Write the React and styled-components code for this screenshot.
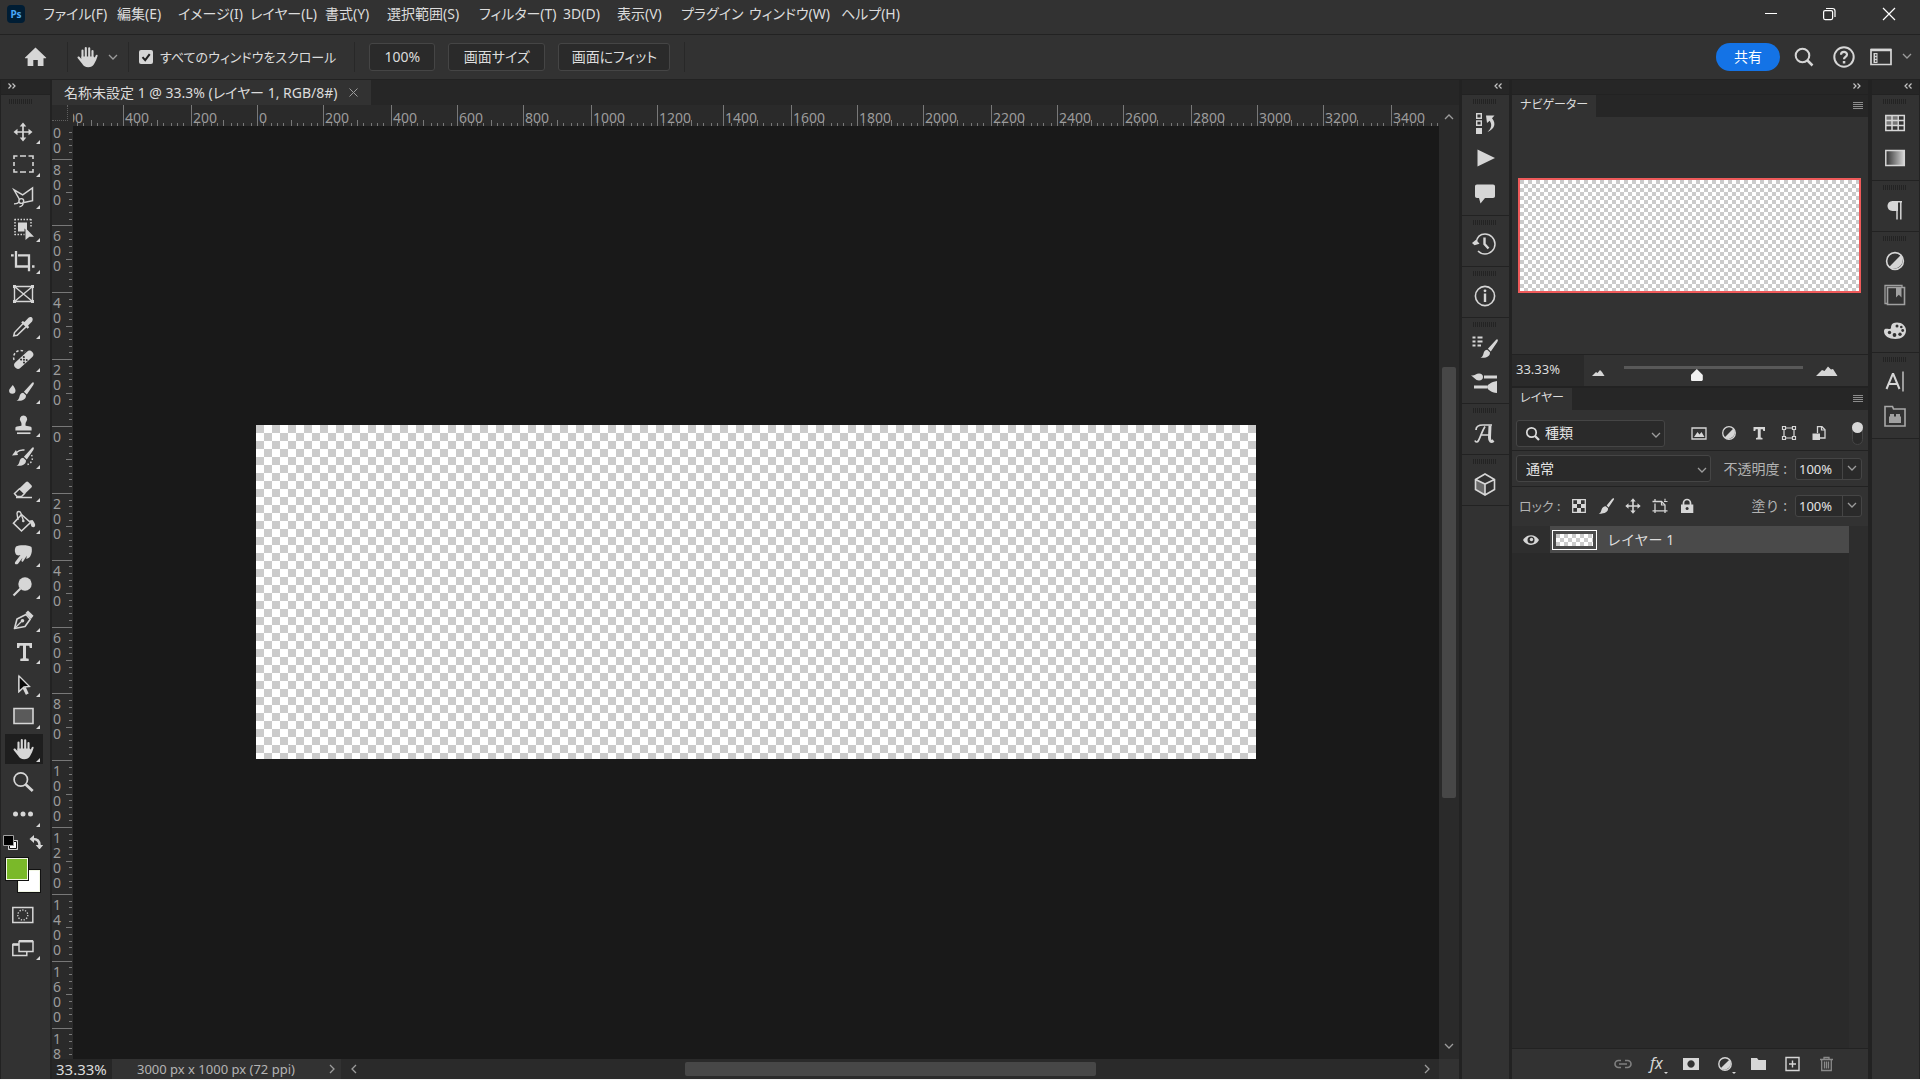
import React from "react";
import styled, { createGlobalStyle, css } from "styled-components";

const GlobalStyle = createGlobalStyle`
  * {
    box-sizing: border-box;
  }
  body {
    margin: 0;
    background: #262626;
    color: #dcdcdc;
    font-family: "Noto Sans", "Noto Sans CJK JP", sans-serif;
    font-size: 14px;
    line-height: 20px;
    overflow: hidden;
  }
  button, input, select {
    margin: 0;
    padding: 0;
    border: 0;
    background: none;
    color: inherit;
    font: inherit;
  }
  svg {
    display: block;
  }
`;

const c = {
  panel: "#323232",
  strip: "#262626",
  field: "#2a2a2a",
  line: "#222222",
  edge: "#454545",
  icon: "#d6d6d6",
  dim: "#9c9c9c",
};

const checker = (size) => css`
  background: repeating-conic-gradient(#ffffff 0 25%, #cbcbcb 0 50%) 0 0 /
    ${size * 2}px ${size * 2}px;
`;

/* ---------- window frame ---------- */

const Screen = styled.div`
  display: flex;
  flex-direction: column;
  height: 100vh;
  border-bottom: 1px solid #f4f4f4;
  background: ${c.line};
`;

const MenuBar = styled.header`
  display: flex;
  align-items: center;
  height: 35px;
  padding: 0 19px 6px 7px;
  background: ${c.panel};
  border-bottom: 1px solid ${c.line};
`;

const Logo = styled.span`
  display: grid;
  place-items: center;
  width: 18px;
  height: 18px;
  margin-right: 18px;
  border-radius: 4px;
  background: #001d34;
  color: #4aa8f8;
  font-size: 10px;
  font-weight: 700;
  line-height: 16px;
`;

const Menus = styled.nav`
  display: grid;
  grid-template-columns: 74px 61px 72px 75px 62px 92px 84px 54px 64px 68px 92px 70px;
  flex: 1;
  button {
    text-align: left;
    white-space: nowrap;
    font-feature-settings: "palt";
  }
`;

const WindowButtons = styled.div`
  display: flex;
  gap: 35px;
`;

const IconButton = styled.button`
  display: grid;
  place-items: center;
  color: ${(p) => p.$color || c.icon};
`;

const OptionsBar = styled.div`
  display: flex;
  align-items: center;
  height: 45px;
  padding: 0 8px 0 4px;
  background: ${c.panel};
  border-bottom: 1px solid ${c.line};
`;

const Divider = styled.span`
  width: 1px;
  height: 30px;
  margin: 0 ${(p) => p.$right || 14}px 0 ${(p) => p.$left || 14}px;
  background: #282828;
`;

const CheckLabel = styled.label`
  display: flex;
  align-items: center;
  gap: 7px;
  font-size: 13px;
  font-feature-settings: "palt";
`;

const CheckBox = styled.span`
  position: relative;
  input {
    appearance: none;
    display: block;
    width: 14px;
    height: 14px;
    border-radius: 2px;
    background: ${c.icon};
  }
  svg {
    position: absolute;
    inset: 0;
    pointer-events: none;
  }
`;

const OptionButton = styled.button`
  height: 28px;
  min-width: ${(p) => p.$width}px;
  margin-right: 13px;
  border: 1px solid ${c.edge};
  border-radius: 3px;
  background: ${c.field};
  font-feature-settings: "palt";
`;

const RightTools = styled.div`
  display: flex;
  align-items: center;
  margin-left: auto;
  gap: 10px;
`;

const ShareButton = styled.button`
  width: 64px;
  height: 28px;
  border-radius: 14px;
  background: #1473e6;
  color: #ffffff;
`;

const Main = styled.main`
  display: flex;
  flex: 1;
  min-height: 0;
`;

/* ---------- docks ---------- */

const Dock = styled.aside`
  display: flex;
  flex-direction: column;
  width: ${(p) => p.$width}px;
  padding: 0 ${(p) => p.$right || 0}px 0 1px;
  background: ${c.line};
`;

const DockHeader = styled.div`
  display: flex;
  align-items: center;
  justify-content: ${(p) => (p.$end ? "flex-end" : "flex-start")};
  height: 15px;
  padding: 0 7px 2px;
  background: ${c.strip};
  border-bottom: 1px solid ${c.line};
`;

const DockBody = styled.div`
  flex: 1;
  background: ${c.panel};
`;

const Grip = styled.div`
  width: 24px;
  height: 5px;
  background: repeating-linear-gradient(90deg, #232323 0 1px, transparent 1px 2px);
`;

const DockGroup = styled.div`
  display: flex;
  flex-direction: column;
  align-items: center;
  padding: 4px 1px 4px 0;
  border-bottom: 1px solid ${c.line};
  ${Grip} {
    margin-bottom: 2px;
  }
  button {
    width: 35px;
    height: 35px;
  }
`;

const ToolGrip = styled.div`
  display: flex;
  justify-content: center;
  height: 21px;
  padding: 4px 9px 0 0;
`;

const ToolButton = styled.button`
  position: relative;
  display: grid;
  place-items: center;
  width: 38px;
  height: 32px;
  margin-left: 4px;
  padding-right: 2px;
  color: ${c.icon};
  background: ${(p) => (p.$active ? "#1e1e1e" : "transparent")};
  background-clip: padding-box;
  border: solid transparent;
  border-width: ${(p) => (p.$active ? "1px 0 2px" : "0")};
  &:nth-of-type(even) {
    height: 33px;
  }
  ${(p) =>
    p.$more &&
    css`
      &::after {
        content: "";
        position: absolute;
        right: 3px;
        bottom: ${p.$active ? 2 : 4}px;
        border: 2px solid transparent;
        border-right-color: ${c.icon};
        border-bottom-color: ${c.icon};
      }
    `}
`;

const ColorRow = styled.div`
  display: flex;
  align-items: flex-start;
  justify-content: space-between;
  height: 26px;
  padding: 4px 7px 0 2px;
`;

const Swatches = styled.div`
  position: relative;
  width: 36px;
  height: 36px;
  margin: 0 0 6px 4px;
`;

const Swatch = styled.button`
  position: absolute;
  top: ${(p) => p.$offset}px;
  left: ${(p) => p.$offset}px;
  width: 24px;
  height: 24px;
  border: 1px solid #111111;
  box-shadow: inset 0 0 0 1px #f2f7e4;
  background: ${(p) => p.$color};
`;

/* ---------- document ---------- */

const Document = styled.section`
  display: flex;
  flex-direction: column;
  flex: 1;
  min-width: 0;
  margin-right: 2px;
`;

const Tabs = styled.div`
  display: flex;
  height: 25px;
  background: ${c.strip};
`;

const Tab = styled.div`
  display: flex;
  align-items: center;
  justify-content: space-between;
  width: 319px;
  padding: 0 13px 0 12px;
  background: ${c.panel};
  white-space: nowrap;
  font-feature-settings: "palt";
`;

const Workspace = styled.div`
  display: grid;
  grid-template-columns: 21px 1fr 20px;
  grid-template-rows: 21px 1fr;
  flex: 1;
  min-height: 0;
  background: ${c.field};
`;

const Corner = styled.div`
  border: dotted #5f5f5f;
  border-width: 0 1px 1px 0;
  margin: 0 5px 5px 0;
`;

const RulerBox = styled.div`
  min-width: 0;
  min-height: 0;
  overflow: hidden;
  background: ${c.field};
`;

const Stage = styled.div`
  display: grid;
  place-items: center;
  min-width: 0;
  overflow: hidden;
  background: #191919;
`;

const Artboard = styled.div`
  width: 1000px;
  height: 334px;
  margin-bottom: 2px;
  ${checker(8)}
`;

const VScroll = styled.div`
  grid-column: 3;
  grid-row: 1 / 3;
  display: flex;
  flex-direction: column;
  align-items: center;
  justify-content: space-between;
  padding: 8px 0 7px;
  background: ${c.field};
`;

const VThumb = styled.span`
  width: 14px;
  height: 46%;
  border-radius: 2px;
  background: #474747;
`;

const StatusBar = styled.footer`
  display: flex;
  height: 20px;
  background: ${c.field};
`;

const ZoomField = styled.input`
  width: 60px;
  padding-left: 4px;
  background: ${c.strip};
  font-size: 15px;
  line-height: 20px;
`;

const DocInfo = styled.button`
  display: flex;
  align-items: center;
  justify-content: space-between;
  width: 229px;
  padding: 0 5px 0 25px;
  background: ${c.panel};
  color: #b4b4b4;
  font-size: 13px;
  white-space: nowrap;
`;

const HScroll = styled.div`
  display: flex;
  align-items: center;
  justify-content: space-between;
  flex: 1;
  padding: 0 8px 0 9px;
`;

const HThumb = styled.span`
  width: 38%;
  height: 14px;
  border-radius: 2px;
  background: #474747;
`;

const ScrollCorner = styled.span`
  width: 20px;
  background: ${c.panel};
`;

/* ---------- panels ---------- */

const PanelColumn = styled.aside`
  display: flex;
  flex-direction: column;
  width: 360px;
  padding: 0 3px 0 1px;
  background: ${c.line};
`;

const Panel = styled.section`
  display: flex;
  flex-direction: column;
  flex: ${(p) => (p.$grow ? "1" : "none")};
  margin-bottom: ${(p) => (p.$grow ? 0 : 2)}px;
  background: ${c.panel};
`;

const PanelTabs = styled.div`
  display: flex;
  justify-content: space-between;
  height: 22px;
  padding-right: 5px;
  background: ${c.strip};
`;

const PanelTab = styled.h2`
  margin: 0;
  padding: 0 8px;
  background: ${c.panel};
  font-size: 12px;
  font-weight: 400;
  font-feature-settings: "palt";
`;

const Preview = styled.div`
  height: 115px;
  margin: 61px 7px 61px 6px;
  border: 2px solid #ee5a5a;
  ${checker(4)}
  background-origin: padding-box;
`;

const ZoomRow = styled.div`
  display: flex;
  align-items: center;
  height: 32px;
  border-top: 1px solid ${c.line};
  input[type="text"] {
    width: 72px;
    height: 31px;
    padding: 0 0 3px 4px;
    background: ${c.field};
    font-size: 13px;
  }
`;

const Slider = styled.input`
  appearance: none;
  flex: 1;
  height: 16px;
  margin: 4px 13px 0 12px;
  &::-webkit-slider-runnable-track {
    height: 3px;
    margin-bottom: 10px;
    background: #585858;
  }
  &::-webkit-slider-thumb {
    appearance: none;
    width: 12px;
    height: 12px;
    margin-top: 3px;
    background: #f0f0f0;
    clip-path: polygon(50% 0, 100% 50%, 100% 92%, 92% 100%, 8% 100%, 0 92%, 0 50%);
  }
`;

const Row = styled.div`
  display: flex;
  align-items: center;
  height: ${(p) => p.$height}px;
  padding: ${(p) => p.$top || 0}px 6px ${(p) => p.$bottom || 0}px 4px;
  border-bottom: ${(p) => (p.$line ? `1px solid ${c.line}` : "0")};
`;

const SelectBox = styled.span`
  position: relative;
  flex: none;
  width: ${(p) => p.$width}px;
  select {
    appearance: none;
    display: block;
    width: 100%;
    height: 27px;
    padding-left: ${(p) => p.$inset}px;
    border: 1px solid ${c.edge};
    border-radius: 3px;
    background: ${c.field};
    color: #e4e4e4;
  }
  svg {
    position: absolute;
    top: 11px;
    right: 4px;
    pointer-events: none;
  }
  svg:first-child {
    top: 6px;
    left: 9px;
  }
`;

const FilterIcons = styled.div`
  display: flex;
  align-items: center;
  justify-content: space-between;
  flex: 1;
  padding: 0 25px 0 26px;
`;

const FilterSwitch = styled.label`
  position: relative;
  width: 11px;
  height: 23px;
  margin-right: -1px;
  border: 1px solid ${c.edge};
  border-radius: 6px;
  background: ${c.field};
  input {
    position: absolute;
    top: -1px;
    left: -1px;
    appearance: none;
    width: 11px;
    height: 11px;
    border-radius: 50%;
    background: ${c.icon};
  }
`;

const FieldLabel = styled.label`
  display: flex;
  align-items: center;
  gap: 8px;
  margin-left: auto;
  color: #b2b2b2;
  white-space: nowrap;
`;

const LockLabel = styled.span`
  width: 43px;
  padding-left: 3px;
  color: #b2b2b2;
  font-size: 13px;
  white-space: nowrap;
  font-feature-settings: "palt";
`;

const Percent = styled.span`
  display: flex;
  height: 22px;
  border: 1px solid ${c.edge};
  border-radius: 3px;
  background: ${c.field};
  color: #e4e4e4;
  input {
    width: 47px;
    padding-left: 3px;
    border-right: 1px solid ${c.edge};
    font-size: 13px;
  }
  button {
    width: 18px;
  }
`;

const LockIcons = styled.div`
  display: flex;
  align-items: center;
  gap: 11px;
  margin-left: 12px;
`;

const LayerList = styled.ul`
  flex: 1;
  margin: 0;
  padding: 0 19px 0 0;
  list-style: none;
  background: linear-gradient(90deg, transparent calc(100% - 19px), #2d2d2d 0) #2a2a2a;
`;

const Layer = styled.li`
  display: flex;
  height: 27px;
  > button:first-child {
    width: 38px;
    background: #2e2e2e;
  }
`;

const LayerBody = styled.div`
  display: flex;
  align-items: center;
  gap: 10px;
  flex: 1;
  padding-left: 2px;
  background: #4a4a4a;
`;

const LayerThumb = styled.span`
  width: 45px;
  height: 20px;
  padding: 3px;
  border: 1px solid #ffffff;
  &::before {
    content: "";
    display: block;
    height: 12px;
    ${checker(4)}
  }
`;

const LayerActions = styled.div`
  display: flex;
  align-items: center;
  justify-content: flex-end;
  gap: 10px;
  height: 31px;
  padding-right: 29px;
  border-top: 1px solid ${c.line};
`;

/* ---------- icons ---------- */

const Svg = ({ w = 24, h = w, children, ...rest }) => (
  <svg
    width={w}
    height={h}
    viewBox={`0 0 ${w} ${h}`}
    fill="none"
    stroke="currentColor"
    strokeWidth="1.6"
    aria-hidden="true"
    {...rest}
  >
    {children}
  </svg>
);

const solid = { fill: "currentColor", stroke: "none" };

const Chevron = ({ dir = "down" }) => {
  const d = {
    down: "M1 2l4 4 4-4",
    up: "M1 6l4-4 4 4",
    left: "M6 1L2 5l4 4",
    right: "M3 1l4 4-4 4",
  }[dir];
  return (
    <Svg w={dir === "down" || dir === "up" ? 10 : 9} h={10} stroke={c.dim} strokeWidth="1.3">
      <path d={d} />
    </Svg>
  );
};

const Double = ({ left }) => (
  <Svg w={8} h={6} stroke="#c4c4c4" strokeWidth="1.2">
    <path d={left ? "M3.500.500L1 3l2.500 2.500M7.500.500L5 3l2.500 2.500" : "M.5.500L3 3 .5 5.500M4.500.500L7 3 4.500 5.500"} />
  </Svg>
);

const PanelMenu = () => (
  <Svg w={10} h={8} stroke="#8c8c8c" strokeWidth="1">
    <path d="M0 .5h10M0 2.5h10M0 4.5h10M0 6.5h10" />
  </Svg>
);

const handShape = (
  <>
    <path
      d="M7.5 13V5.500M10.800 12V3M14.200 12V3.200M17.500 13V6"
      strokeWidth="2.1"
      strokeLinecap="round"
    />
    <path
      {...solid}
      d="M6.4 11.5h12.1l1.3 1 1-2.2c.5-.9 2.1-.6 1.8.6-.9 2.800-2 5.600-3.500 8.100-1.300 2.200-3.300 3.300-5.900 3.300-3 0-4.800-1.400-6-3.500L2.600 13c-.6-1.300.9-2 1.800-1.200l2 2.200z"
    />
  </>
);

const brushShape = (
  <path
    {...solid}
    d="M22.500 2.500c.8.5.2 1.700-.2 2.400l-6.500 9.600-2.900-2.700 8-8.700c.5-.5 1-1 1.600-.6zM12.200 12.700l2.700 2.500c.5 3-1.900 6.100-9.400 5.600 2.300-1 2.500-2.500 3.200-5 .6-2 1.900-3 3.500-3.100z"
  />
);

const halfCircle = (r, m) => (
  <>
    <circle cx={m} cy={m} r={r} />
    <path
      {...solid}
      d={`M${m + r * 0.7} ${m - r * 0.7}A${r} ${r} 0 0 1 ${m - r * 0.7} ${m + r * 0.7}z`}
    />
  </>
);

const tools = [
  {
    name: "移動ツール",
    more: true,
    art: (
      <>
        <path d="M12 5v14M5 12h14" strokeWidth="1.7" />
        <path {...solid} d="M12 2.500l3.300 4H8.700zM12 21.500l3.300-4H8.700zM2.500 12l4-3.300v6.600zM21.500 12l-4-3.300v6.600z" />
      </>
    ),
  },
  {
    name: "長方形選択ツール",
    more: true,
    art: (
      <path d="M3 6V3h3.500M9 3h6M17.500 3H22v3M22 9v4M22 16v3h-4M15 19H9M6.500 19H3v-3M3 13V9" />
    ),
  },
  {
    name: "多角形選択ツール",
    more: true,
    art: (
      <>
        <path d="M8.500 14.500L3 4.800l8.700 5L21.500 3v12.700L13 17.500" strokeWidth="1.5" />
        <circle cx="10.300" cy="16" r="2.400" strokeWidth="1.400" />
        <path d="M3 18.800c2.500.2 4-.5 5.200-1.800M12 18c.3 1.800-1 3.300-3.500 3.700" strokeWidth="1.400" />
      </>
    ),
  },
  {
    name: "オブジェクト選択ツール",
    more: true,
    art: (
      <>
        <path d="M3.500 1.500h17M3.500 16.500h10M4 1v16M20 1v9" strokeWidth="1.500" strokeDasharray="1.500 1.500" />
        <path {...solid} d="M7 4.500h9v8l-2.500-2v3H7z" />
        <path {...solid} d="M14.500 10l8.500 8.700h-4.600l-3.900 3.300z" />
      </>
    ),
  },
  {
    name: "切り抜きツール",
    more: true,
    art: <path d="M5 1v15.500h14M21 16.500h2.500M0 5.300h2.700M7 5.300h11v16" strokeWidth="2.300" />,
  },
  {
    name: "フレームツール",
    art: (
      <>
        <path d="M3.500 3.500h18v15h-18zM3.500 3.500l18 15M21.500 3.500l-18 15" strokeWidth="1.400" />
        <path {...solid} d="M2 2h3v3H2zM20 2h3v3h-3zM2 17h3v3H2zM20 17h3v3h-3z" />
      </>
    ),
  },
  {
    name: "スポイトツール",
    more: true,
    art: (
      <>
        <path d="M12.200 8.500l-8.700 9-.8 3.300 3.500-.5 9-8.700" strokeWidth="1.500" />
        <path {...solid} d="M10.200 7.400l1.600-1.500 1.700 1 4-4.200c2.800-1.800 5.500.8 3.600 3.700l-4 4 1 1.900-1.500 1.500z" />
      </>
    ),
  },
  {
    name: "スポット修復ブラシツール",
    more: true,
    art: (
      <>
        <path d="M3 12c-1.500-5 1.500-9.500 6.500-9.500 2 0 3 .3 4.500 1.500" strokeDasharray="2.500 2" strokeWidth="1.500" />
        <path d="M7 17L18.500 6.500" strokeWidth="7.500" strokeLinecap="round" />
        <path
          d="M10 11.500l.1.100M13 14.500l.1.100M12.800 9l.1.100M15.700 12l.1.100M12.900 11.700l.1.100"
          stroke={c.panel}
          strokeWidth="2"
          strokeLinecap="round"
        />
      </>
    ),
  },
  {
    name: "ブラシツール",
    more: true,
    art: (
      <>
        {brushShape}
        <path {...solid} d="M1.800 5c1.500 2.300 2.700 4 2.700 5.600a3.200 3.200 0 0 1-6.400 0C-1.900 9 .3 7.300 1.800 5z" />
      </>
    ),
  },
  {
    name: "コピースタンプツール",
    more: true,
    art: (
      <>
        <path
          {...solid}
          d="M12.500 2.500a3.700 3.700 0 0 1 3 5.800c-1 1.500-1.200 2.800-.9 4.500l4.400.6c1 .2 1.600.8 1.600 1.700V17.500H4.400v-2.400c0-.9.6-1.500 1.600-1.700l4.400-.6c.3-1.700.1-3-.9-4.500a3.700 3.700 0 0 1 3-5.800z"
        />
        <path d="M6 20.200h13.500" strokeWidth="1.700" />
      </>
    ),
  },
  {
    name: "ヒストリーブラシツール",
    more: true,
    art: (
      <>
        {brushShape}
        <path {...solid} d="M1 10.500l4-5.500 2 5z" />
        <path d="M5.500 7.500c2-2 4.500-3 8-2.500" strokeWidth="1.500" />
        <path d="M20.500 10c2 3.500.5 8-4 9.500" strokeWidth="1.500" strokeDasharray="1.500 2" />
      </>
    ),
  },
  {
    name: "消しゴムツール",
    more: true,
    art: (
      <>
        <path d="M3.500 15.500l5-4.700 5 4.700-3 3H6z" strokeWidth="1.500" />
        <path {...solid} d="M8.500 10.300l6.500-6.200c.8-.7 1.500-.7 2.200 0l3.200 3.100c.7.700.7 1.500 0 2.200l-6.500 6.300z" />
        <path d="M5 19.500h16" strokeWidth="1.500" />
      </>
    ),
  },
  {
    name: "塗りつぶしツール",
    more: true,
    art: (
      <>
        <path d="M10.500 4.500l9 8-9 8.500-8-7.800z" strokeWidth="1.600" />
        <path d="M7 10L6 3.500c0-2.400 3-2.700 3.800-.6l2.500 7.500" strokeWidth="1.400" />
        <circle cx="12.300" cy="11" r="1.300" {...solid} />
        <path {...solid} d="M18.500 10.500l3-.5c2 2.500 3.200 4.500 2.500 6.200-1 1.700-3.500 1.300-3.900-.6-.2-1.700-.8-3-1.600-5.100z" />
      </>
    ),
  },
  {
    name: "指先ツール",
    more: true,
    art: (
      <path
        {...solid}
        d="M5 3.500C8 1.500 18 1.700 20.500 4c.8 3 .4 6.500-1.200 9.200-.8 1.400-2.400 2.300-4 2.700l.5-3.200-3.600 5.500c-.8 1-2.100.4-1.700-.9l1-2.600-4.500 6c-1.300 1.200-4.200.5-2.800-1.700L9.500 12c-2 .9-4 .6-5-1.500-1-2.300-.8-5.500.5-7z"
      />
    ),
  },
  {
    name: "覆い焼きツール",
    more: true,
    art: (
      <>
        <circle cx="14" cy="9" r="6.700" {...solid} />
        <path d="M9.500 13.500L2.500 20.500" strokeWidth="2.200" />
      </>
    ),
  },
  {
    name: "ペンツール",
    more: true,
    art: (
      <>
        <path d="M3.500 20.500L6 11l9-4.500 4.200 4.700L14 18.500z" strokeWidth="1.600" strokeLinejoin="round" />
        <path d="M3.500 20.500l7-7" strokeWidth="1.300" />
        <circle cx="11.500" cy="12.800" r="1.800" {...solid} />
        <path {...solid} d="M14.500 5L17 2.500l5.500 5.300L20 11z" />
      </>
    ),
  },
  {
    name: "文字ツール",
    more: true,
    art: <path {...solid} d="M6 3h15v5h-2.200l-.6-2.300h-3.200v12.600l2.700.5V21H9.300v-2.200l2.700-.5V5.700H8.800L8.200 8H6z" />,
  },
  {
    name: "パスコンポーネント選択ツール",
    more: true,
    art: (
      <>
        <path d="M8 3v15.500l4-4 3.500 6.800" strokeWidth="1.500" />
        <path d="M13.500 14.500l3 6.500" strokeWidth="2.600" />
        <path d="M8 3l10.500 10.500-5.500.5-5 4.500z" fill="#0a0a0a" strokeWidth="1.300" />
      </>
    ),
  },
  {
    name: "長方形ツール",
    more: true,
    art: <path d="M3 3.500h19v15H3z" fill="#5a5a5a" strokeWidth="1.600" />,
  },
  { name: "手のひらツール", more: true, active: true, art: handShape },
  {
    name: "ズームツール",
    art: (
      <>
        <circle cx="9.800" cy="9.500" r="6.700" strokeWidth="1.700" />
        <path d="M14.700 14.500l7 6.500" strokeWidth="2.800" />
      </>
    ),
  },
  {
    name: "ツールバーを編集",
    more: true,
    art: (
      <>
        <circle cx="4.500" cy="11" r="2.500" {...solid} />
        <circle cx="12" cy="11" r="2.500" {...solid} />
        <circle cx="19.500" cy="11" r="2.500" {...solid} />
      </>
    ),
  },
];

const leftDock = [
  [
    {
      name: "バージョン履歴",
      art: (
        <>
          <path d="M3.700 1.700h4.600v4.600H3.700zM3.700 9h4.600v4.300H3.700z" strokeWidth="1.400" />
          <path {...solid} d="M3 16h6v6H3z" />
          <path {...solid} d="M13 3.500h8.500l-2.500 2.800c4.500 5.500 2.600 10.500-4.500 13.700 4.200-4 4.700-7.500 2.200-11.300L14 11z" />
        </>
      ),
    },
    { name: "アクション", art: <path {...solid} d="M4.500 2.500v17L22 11z" /> },
    {
      name: "コメント",
      art: <path {...solid} d="M4 2.500h16c1.300 0 2 .7 2 2v9.500c0 1.300-.7 2-2 2h-8L7.500 21.500 6 16H4c-1.300 0-2-.7-2-2V4.500c0-1.300.7-2 2-2z" />,
    },
  ],
  [
    {
      name: "ヒストリー",
      art: (
        <>
          <path d="M3 9.500C4 4 7.500 1 12 1c5.500 0 10 4.500 10 10s-4.500 10-10 10c-3 0-5-1-7-3" strokeWidth="1.500" />
          <path {...solid} d="M-1 10l4-3.200 3.500 4-5 1.500z" />
          <path d="M11.500 4.500v6.500l4 4.500" strokeWidth="2.400" />
        </>
      ),
    },
  ],
  [
    {
      name: "情報",
      art: (
        <>
          <circle cx="12" cy="12" r="9.600" strokeWidth="1.600" />
          <path d="M12 9.500V18" strokeWidth="2.400" />
          <circle cx="12" cy="6.800" r="1.400" {...solid} />
        </>
      ),
    },
  ],
  [
    {
      name: "ブラシ設定",
      art: (
        <>
          <path d="M-.5 2.500h3M4.500 2.500h5M-.5 6.500h3M4.500 6.500h5M-.5 10.500h3M4.500 10.500h3.500" strokeWidth="2" />
          <g transform="translate(2 2)">{brushShape}</g>
        </>
      ),
    },
    {
      name: "ブラシ",
      art: (
        <>
          <path d="M11 7h13M1 17h13" strokeWidth="3" />
          <path {...solid} d="M-2 5.500C2 6 3 3.500 6 3.500c2.500 0 4 1.500 4 3.500s-1.500 3.500-4 3.500C2.500 10.500 1 7-2 5.500zM14 17c0-2 4-5 10-6v12c-6-.5-10-4-10-6z" />
        </>
      ),
    },
  ],
  [
    {
      name: "字形",
      art: (
        <>
          <path d="M3 9c0-4 3-5 7-5h9M12 5.500C9 10 7.500 16 5.500 19.500c-1 2-3 2-3.500 0M8.500 14h8" strokeWidth="1.700" />
          <path d="M17 4.500l-.5 12c0 3.500 1.500 5 4 3" strokeWidth="3" />
        </>
      ),
    },
  ],
  [
    {
      name: "3D",
      art: (
        <>
          <path d="M2.500 7.500l9.500 4v11l-9.500-5z" fill="#6a6a6a" stroke="none" />
          <path d="M12 2L21.500 7.500v10L12 23l-9.500-5.500v-10zM2.500 7.500L12 12l9.500-4.500M12 12v11" strokeWidth="1.600" />
        </>
      ),
    },
  ],
];

const rightDock = [
  [
    {
      name: "スウォッチ",
      art: (
        <>
          <path d="M2.500 3.500h12v10h-12z" fill="#777777" stroke="none" />
          <path d="M2.800 3.500h18.500v15H2.800zM2.800 8.500h18.500M2.800 13.500h18.500M9 3.500v15M15.200 3.500v15" strokeWidth="1.500" />
        </>
      ),
    },
    {
      name: "グラデーション",
      art: (
        <>
          <defs>
            <linearGradient id="ramp">
              <stop offset="0" stopColor="#303030" />
              <stop offset="1" stopColor="#d6d6d6" />
            </linearGradient>
          </defs>
          <path d="M2.800 3.500h18.500v15H2.800z" fill="url(#ramp)" strokeWidth="1.500" />
        </>
      ),
    },
  ],
  [
    {
      name: "段落",
      art: (
        <>
          <path {...solid} d="M15 3v10h-5.500C2.800 13 2.800 3 9.500 3z" />
          <path d="M9 3.700h10M14 3v18.500" strokeWidth="1.500" />
          <path d="M17.800 3v18.500" strokeWidth="1.500" />
        </>
      ),
    },
  ],
  [
    { name: "色調補正", art: <g strokeWidth="1.600">{halfCircle(8.4, 12)}</g> },
    {
      name: "CC ライブラリ",
      art: (
        <>
          <path d="M19 3.500V1.500H2v18h2" stroke="#a0a0a0" strokeWidth="1.300" />
          <path d="M4.500 3.500h17v17h-17z" stroke="#a0a0a0" strokeWidth="1.600" />
          <path {...solid} fill="#a0a0a0" d="M13 3.500h5.500v10l-2.700-2.700L13 13.500z" />
        </>
      ),
    },
    {
      name: "カラー",
      art: (
        <>
          <path
            {...solid}
            d="M1 12.500c0-3.500 2.500-2.500 5-2.500 2.700 0 1.800-1.600 2.200-3C8.800 4.300 11 3.500 14 3.500c5 0 9 3.500 9 8 0 5-4.500 8.500-10.500 8.500C6 20 1 17 1 12.500z"
          />
          <g fill={c.panel} stroke="none">
            <circle cx="6.500" cy="13.500" r="1.700" />
            <circle cx="11.500" cy="16" r="1.900" />
            <circle cx="17" cy="15.300" r="1.700" />
            <circle cx="19.700" cy="11.500" r="1.400" />
            <circle cx="18.300" cy="8" r="1.300" />
            <circle cx="14" cy="7" r="1.500" />
          </g>
        </>
      ),
    },
  ],
  [
    {
      name: "文字",
      art: (
        <>
          <path d="M3.500 19L9.700 4h.6l6.200 15M6 14h8" strokeWidth="2" />
          <path d="M20 1.500v20" strokeWidth="1.300" />
        </>
      ),
    },
    {
      name: "ライブラリ",
      art: (
        <>
          <path d="M2 1.500h7.500l1 2.500H22v17H2z" stroke="#a8a8a8" />
          <path {...solid} fill="#a0a0a0" d="M6 11.500h1V9h4v2.500h2V9h4v2.500h1V18H6z" />
        </>
      ),
    },
  ],
];

const smallIcons = {
  pixel: (
    <>
      <path d="M1 3h14v11H1z" strokeWidth="1.300" />
      <path {...solid} d="M3 12l3.500-5 2 2.500L10.500 7l3 5z" />
    </>
  ),
  adjust: <g strokeWidth="1.300">{halfCircle(6.3, 8)}</g>,
  type: <path {...solid} d="M2.500 2h11.500v4h-1.700l-.5-1.800H9.700v8.300l1.800.4V14.500H5v-1.600l1.800-.4V4.200H4.700L4.200 6H2.500z" />,
  shape: (
    <>
      <path d="M3 3h10v10H3z" strokeWidth="1.200" />
      <path d="M1.500 1.500h3v3h-3zM11.500 1.500h3v3h-3zM1.500 11.500h3v3h-3zM11.500 11.500h3v3h-3z" fill={c.panel} strokeWidth="1.200" />
    </>
  ),
  smart: (
    <>
      <path d="M6.500 8V1.700h4.500l3 3V13H9" strokeWidth="1.300" />
      <path d="M10.500 1.500V5H14" strokeWidth="1.200" />
      <path {...solid} d="M1.500 8.500H9v6.500H1.500z" />
    </>
  ),
  alpha: (
    <>
      <path d="M1.700 1.700h12.600v12.600H1.700z" strokeWidth="1.300" />
      <path {...solid} d="M6 2h4v4H6zM2 6h4v4H2zM10 6h4v4h-4zM6 10h4v4H6z" />
    </>
  ),
  brush: (
    <path
      {...solid}
      d="M15.800.3c.7.4.1 1.200-.2 1.800l-5 7.400-2-2L14 .9c.6-.6 1.200-1 1.800-.6zM7.800 8.300l2.200 2c.3 3.200-2 5.500-9.300 5.500 2-1 2.200-2 2.800-4 .7-2.300 2.200-3.600 4.300-3.500z"
    />
  ),
  move: (
    <>
      <path d="M8 3v10M3 8h10" strokeWidth="1.600" />
      <path {...solid} d="M8 .3l2.700 3.200H5.300zM8 15.700l2.700-3.200H5.300zM.3 8l3.200-2.700v5.400zM15.700 8l-3.200-2.700v5.400z" />
    </>
  ),
  artboard: (
    <>
      <path d="M3 1v2.500M.5 3.500h9l3.500 3.500v6M3 5.500V15M.5 12.800h15M13 13v2" strokeWidth="1.300" />
      <path d="M9.500 4v3H13M12 3.500h3.500M13 .8v2" strokeWidth="1.200" />
    </>
  ),
  lock: (
    <>
      <path d="M4.500 7V5a3.500 3.500 0 0 1 7 0v2" strokeWidth="1.700" />
      <path {...solid} d="M2 6.500h12.300v8.500H2z" />
      <circle cx="8.100" cy="10.500" r="1.500" fill={c.panel} stroke="none" />
    </>
  ),
};

const Small = ({ name, label }) => (
  <IconButton type="button" aria-label={label}>
    <Svg w={16}>{smallIcons[name]}</Svg>
  </IconButton>
);

/* ---------- rulers ---------- */

const snap = (n) => 2 * Math.round((n - 1) / 2) + 1;

const HRuler = () => {
  const zero = 184;
  const step = 200 / 3;
  const marks = [];
  for (let i = -30; i <= 180; i++) {
    const x = snap(zero + (i * step) / 10 + 73) - 73 + 0.5;
    const size = i % 10 === 0 ? 21 : i % 5 === 0 ? 6 : 3;
    marks.push(<path key={i} d={`M${x} ${21 - size}V21`} />);
  }
  const labels = [];
  for (let n = -3; n <= 17; n++) {
    labels.push(
      <text key={n} x={snap(zero + n * step + 73) - 71} y="18">
        {Math.abs(n * 200)}
      </text>
    );
  }
  return (
    <svg width="100%" height="21" stroke="#787878">
      {marks}
      <g fill={c.dim} stroke="none" fontSize="14">{labels}</g>
    </svg>
  );
};

// digits of the vertical ruler are stacked one below the other
const VRuler = () => {
  const zero = 300;
  const step = 66.85;
  const marks = [];
  for (let i = -50; i <= 100; i++) {
    const y = Math.round(zero + (i * step) / 10) + 0.5;
    const size = i % 10 === 0 ? 21 : i % 5 === 0 ? 6 : 3;
    marks.push(<path key={i} d={`M${20 - size} ${y}H20`} />);
  }
  const labels = [];
  for (let n = -5; n <= 9; n++) {
    const top = Math.round(zero + n * step);
    String(Math.abs(n * 200))
      .split("")
      .forEach((digit, k) => {
        const y = top + 16 + k * 15;
        if (y < 10 || y > 935) return;
        labels.push(
          <text key={`${n}-${k}`} x="1" y={y}>
            {digit}
          </text>
        );
      });
  }
  return (
    <svg width="21" height="100%" stroke="#787878">
      {marks}
      <g fill={c.dim} stroke="none" fontSize="14">{labels}</g>
    </svg>
  );
};

/* ---------- page ---------- */

const menus = [
  "ファイル(F)",
  "編集(E)",
  "イメージ(I)",
  "レイヤー(L)",
  "書式(Y)",
  "選択範囲(S)",
  "フィルター(T)",
  "3D(D)",
  "表示(V)",
  "プラグイン",
  "ウィンドウ(W)",
  "ヘルプ(H)",
];

const IconDock = ({ groups, width, right }) => (
  <Dock $width={width} $right={right}>
    <DockHeader $end>
      <Double left />
    </DockHeader>
    <DockBody>
      {groups.map((group) => (
        <DockGroup key={group[0].name}>
          <Grip />
          {group.map((item) => (
            <IconButton key={item.name} type="button" aria-label={item.name}>
              <Svg overflow="visible">{item.art}</Svg>
            </IconButton>
          ))}
        </DockGroup>
      ))}
    </DockBody>
  </Dock>
);

const ToolDock = () => (
  <Dock $width={52} $right={2}>
    <DockHeader>
      <Double />
    </DockHeader>
    <DockBody>
      <ToolGrip>
        <Grip />
      </ToolGrip>
      <div>
        {tools.map((tool) => (
          <ToolButton
            key={tool.name}
            type="button"
            aria-label={tool.name}
            $more={tool.more}
            $active={tool.active}
          >
            <Svg overflow="visible">{tool.art}</Svg>
          </ToolButton>
        ))}
      </div>
      <ColorRow>
        <IconButton type="button" aria-label="初期設定の描画色と背景色">
          <Svg w={16} strokeWidth="1">
            <path d="M5.500 5.500h9v9h-9z" fill="#ffffff" stroke="#d6d6d6" />
            <path d="M6.500 6.500h7v7h-7z" stroke="#111111" />
            <path d="M.5.500h10v10H.5z" fill="#000000" stroke="#a0a0a0" />
          </Svg>
        </IconButton>
        <IconButton type="button" aria-label="描画色と背景色を入れ替え">
          <Svg w={14}>
            <path d="M4 4c4.500 0 6.500 2 6.500 6" strokeWidth="2.500" />
            <path {...solid} d="M.5 4L5 0v8zM10.500 14.500l-3.800-4.500h7.500z" />
          </Svg>
        </IconButton>
      </ColorRow>
      <Swatches>
        <Swatch type="button" aria-label="背景色" $offset={12} $color="#ffffff" />
        <Swatch type="button" aria-label="描画色" $offset={0} $color="#7ab929" />
      </Swatches>
      <ToolButton type="button" aria-label="クイックマスク">
        <Svg>
          <path d="M1.800 4.500h20v15h-20z" strokeWidth="1.500" />
          <circle cx="11.800" cy="12" r="5" strokeWidth="1.300" strokeDasharray="1.300 1.500" />
        </Svg>
      </ToolButton>
      <ToolButton type="button" aria-label="スクリーンモード" $more>
        <Svg>
          <path d="M8 8.500H1.800v11h14V16" strokeWidth="1.500" />
          <path d="M8 5.500h14v10H8z" strokeWidth="1.500" />
          <path d="M8 5.200h14M1.800 8.500h6" strokeWidth="2.300" />
        </Svg>
      </ToolButton>
    </DockBody>
  </Dock>
);

const PercentField = ({ id, label }) => (
  <FieldLabel htmlFor={id}>
    {label}
    <Percent>
      <input id={id} type="text" defaultValue="100%" />
      <IconButton type="button" aria-label={`${label} スライダー`}>
        <Chevron />
      </IconButton>
    </Percent>
  </FieldLabel>
);

const App = () => {
  return (
    <Screen>
      <GlobalStyle />
      <MenuBar>
        <Logo>Ps</Logo>
        <Menus>
          {menus.map((menu) => (
            <button key={menu} type="button">
              {menu}
            </button>
          ))}
        </Menus>
        <WindowButtons>
          <IconButton type="button" aria-label="最小化" $color="#ffffff">
            <Svg w={24} h={14} strokeWidth="1"><path d="M6 6.500h12" /></Svg>
          </IconButton>
          <IconButton type="button" aria-label="元に戻す" $color="#ffffff">
            <Svg w={24} h={14} strokeWidth="1.200">
              <rect x="5.600" y="3.600" width="9" height="9" rx="1.500" />
              <path d="M8 1.500h6.500c1.500 0 2.500 1 2.500 2.500v6" />
            </Svg>
          </IconButton>
          <IconButton type="button" aria-label="閉じる" $color="#ffffff">
            <Svg w={24} h={14} strokeWidth="1.200"><path d="M6 1l12 12M18 1L6 13" /></Svg>
          </IconButton>
        </WindowButtons>
      </MenuBar>

      <OptionsBar>
        <IconButton type="button" aria-label="ホーム">
          <Svg w={62} h={24}>
            <path {...solid} d="M31.500 2.500L42 12.500c.4.500.2.800-.3.800h-2.200V21h-5.700v-6h-4.500v6h-5.700v-7.700h-2.200c-.5 0-.7-.3-.3-.8z" />
          </Svg>
        </IconButton>
        <Divider $left={1} $right={7} />
        <IconButton type="button" aria-label="手のひらツール">
          <Svg w={24}>{handShape}</Svg>
        </IconButton>
        <IconButton type="button" aria-label="ツールプリセット">
          <Svg w={26} h={10} stroke={c.dim} strokeWidth="1.300"><path d="M10 3l4 4 4-4" /></Svg>
        </IconButton>
        <Divider $left={3} $right={10} />
        <CheckLabel htmlFor="scroll-all">
          <CheckBox>
            <input id="scroll-all" type="checkbox" defaultChecked />
            <Svg w={14} stroke="#222222" strokeWidth="2"><path d="M3.500 7.200l2.700 3 4.500-6" /></Svg>
          </CheckBox>
          すべてのウィンドウをスクロール
        </CheckLabel>
        <Divider $left={18} />
        <OptionButton type="button" $width={66}>100%</OptionButton>
        <OptionButton type="button" $width={97}>画面サイズ</OptionButton>
        <OptionButton type="button" $width={112}>画面にフィット</OptionButton>
        <Divider $left={1} />
        <RightTools>
          <ShareButton type="button">共有</ShareButton>
          <IconButton type="button" aria-label="検索">
            <Svg w={28} h={20}>
              <circle cx="12.500" cy="8.500" r="6.800" strokeWidth="2" />
              <path d="M17.500 13.500l5 5" strokeWidth="2.500" />
            </Svg>
          </IconButton>
          <IconButton type="button" aria-label="ヘルプ">
            <Svg w={32} h={24}>
              <circle cx="16" cy="12" r="9.700" strokeWidth="2" />
              <path d="M13 9.700c0-3.800 6-3.700 6-.2 0 2.300-3 2.500-3 4.800" strokeWidth="2.200" />
              <path {...solid} d="M14.800 16h2.500v2.500h-2.500z" />
            </Svg>
          </IconButton>
          <IconButton type="button" aria-label="ワークスペース">
            <Svg w={22} h={18}>
              <path d="M1 1.500h20v15H1z" strokeWidth="1.700" />
              <path d="M1 2h20" strokeWidth="2.500" />
              <path {...solid} d="M3.500 5h4v10h-4z" />
              <path d="M5 7h1.500M5 10h1.500M5 13h1.500" stroke={c.panel} strokeWidth="1.300" />
            </Svg>
          </IconButton>
          <IconButton type="button" aria-label="ワークスペースを選択">
            <Chevron />
          </IconButton>
        </RightTools>
      </OptionsBar>

      <Main>
        <ToolDock />

        <Document>
          <Tabs>
            <Tab>
              名称未設定 1 @ 33.3% (レイヤー 1, RGB/8#)
              <IconButton type="button" aria-label="タブを閉じる" $color={c.dim}>
                <Svg w={9} strokeWidth="1"><path d="M.5.500l8 8M8.500.500l-8 8" /></Svg>
              </IconButton>
            </Tab>
          </Tabs>
          <Workspace>
            <Corner />
            <RulerBox>
              <HRuler />
            </RulerBox>
            <VScroll>
              <Chevron dir="up" />
              <VThumb />
              <Chevron />
            </VScroll>
            <RulerBox>
              <VRuler />
            </RulerBox>
            <Stage>
              <Artboard />
            </Stage>
          </Workspace>
          <StatusBar>
            <ZoomField type="text" aria-label="ズーム率" defaultValue="33.33%" />
            <DocInfo type="button">
              3000 px x 1000 px (72 ppi)
              <Chevron dir="right" />
            </DocInfo>
            <HScroll>
              <Chevron dir="left" />
              <HThumb />
              <Chevron dir="right" />
            </HScroll>
            <ScrollCorner />
          </StatusBar>
        </Document>

        <IconDock groups={leftDock} width={50} right={2} />

        <PanelColumn>
          <DockHeader $end>
            <Double />
          </DockHeader>
          <Panel>
            <PanelTabs>
              <PanelTab>ナビゲーター</PanelTab>
              <IconButton type="button" aria-label="パネルメニュー">
                <PanelMenu />
              </IconButton>
            </PanelTabs>
            <Preview />
            <ZoomRow>
              <input type="text" aria-label="表示倍率" defaultValue="33.33%" />
              <IconButton type="button" aria-label="ズームアウト">
                <Svg w={28} h={12}>
                  <path {...solid} d="M8 11l4-4 1.500 1L16 5l2 2 2.500 4z" />
                </Svg>
              </IconButton>
              <Slider type="range" aria-label="ズーム" min="0" max="100" defaultValue="40" />
              <IconButton type="button" aria-label="ズームイン">
                <Svg w={52} h={12}>
                  <path {...solid} d="M0 11l6-6 2.500 1L12 1.500l3 3 2-.5 4.500 7z" />
                </Svg>
              </IconButton>
            </ZoomRow>
          </Panel>

          <Panel $grow>
            <PanelTabs>
              <PanelTab>レイヤー</PanelTab>
              <IconButton type="button" aria-label="パネルメニュー">
                <PanelMenu />
              </IconButton>
            </PanelTabs>
            <Row $height={41} $top={6} $line>
              <SelectBox $width={149} $inset={28}>
                <Svg w={15}>
                  <circle cx="6.500" cy="6.500" r="4.700" strokeWidth="1.700" />
                  <path d="M10 10l4 4" strokeWidth="2.300" />
                </Svg>
                <select aria-label="フィルターの種類" defaultValue="種類">
                  <option>種類</option>
                </select>
                <Chevron />
              </SelectBox>
              <FilterIcons>
                <Small name="pixel" label="ピクセルレイヤー" />
                <Small name="adjust" label="調整レイヤー" />
                <Small name="type" label="テキストレイヤー" />
                <Small name="shape" label="シェイプレイヤー" />
                <Small name="smart" label="スマートオブジェクト" />
              </FilterIcons>
              <FilterSwitch>
                <input type="checkbox" aria-label="レイヤーフィルター" defaultChecked />
              </FilterSwitch>
            </Row>
            <Row $height={36} $line>
              <SelectBox $width={195} $inset={9}>
                <select aria-label="描画モード" defaultValue="通常">
                  <option>通常</option>
                </select>
                <Chevron />
              </SelectBox>
              <PercentField id="opacity" label="不透明度 :" />
            </Row>
            <Row $height={39} $bottom={2}>
              <LockLabel>ロック :</LockLabel>
              <LockIcons>
                <Small name="alpha" label="透明ピクセルをロック" />
                <Small name="brush" label="画像ピクセルをロック" />
                <Small name="move" label="位置をロック" />
                <Small name="artboard" label="自動ネストを防止" />
                <Small name="lock" label="すべてをロック" />
              </LockIcons>
              <PercentField id="fill" label="塗り :" />
            </Row>
            <LayerList>
              <Layer>
                <IconButton type="button" aria-label="レイヤーの表示">
                  <Svg w={16}>
                    <path {...solid} d="M0 8c3.500-6.500 12.500-6.500 16 0-3.500 6.500-12.500 6.500-16 0z" />
                    <circle cx="8" cy="8" r="3.500" fill="#2e2e2e" stroke="none" />
                    <circle cx="8.500" cy="7.500" r="1.700" {...solid} />
                  </Svg>
                </IconButton>
                <LayerBody>
                  <LayerThumb />
                  <span>レイヤー 1</span>
                </LayerBody>
              </Layer>
            </LayerList>
            <LayerActions>
              <IconButton type="button" aria-label="レイヤーをリンク" $color="#808080">
                <Svg w={24}>
                  <path d="M10 8.500H7.500a3.500 3.500 0 0 0 0 7H10M14 8.500h2.500a3.500 3.500 0 0 1 0 7H14M8 12h8" />
                </Svg>
              </IconButton>
              <IconButton type="button" aria-label="レイヤースタイル">
                <Svg w={24} overflow="visible">
                  <text x="5" y="17" fill="currentColor" stroke="none" fontSize="16" fontStyle="italic">fx</text>
                  <path {...solid} d="M19 20h4l-2 2z" />
                </Svg>
              </IconButton>
              <IconButton type="button" aria-label="レイヤーマスク">
                <Svg w={24}>
                  <path {...solid} fillRule="evenodd" d="M4 6h16v12H4zM12 8.300a3.700 3.700 0 1 0 .1 0z" />
                </Svg>
              </IconButton>
              <IconButton type="button" aria-label="調整レイヤーを作成">
                <Svg w={24} overflow="visible">
                  <g strokeWidth="1.400">{halfCircle(6.2, 12)}</g>
                  <path {...solid} d="M19 20h4l-2 2z" />
                </Svg>
              </IconButton>
              <IconButton type="button" aria-label="新規グループ">
                <Svg w={24}>
                  <path {...solid} d="M4 6h6l1.500 2H19v10H4z" />
                </Svg>
              </IconButton>
              <IconButton type="button" aria-label="新規レイヤー">
                <Svg w={24} strokeWidth="1.400">
                  <path d="M5 5.500h13v13H5zM11.500 8.500v7M8 12h7" />
                </Svg>
              </IconButton>
              <IconButton type="button" aria-label="レイヤーを削除" $color="#8a8a8a">
                <Svg w={24} strokeWidth="1.300">
                  <path d="M5 7.500h13M9 7V5.500h5V7M6.700 8v10.500h9.600V8M9.500 9.500v7M11.500 9.500v7M13.500 9.500v7" />
                </Svg>
              </IconButton>
            </LayerActions>
          </Panel>
        </PanelColumn>

        <IconDock groups={rightDock} width={49} right={1} />
      </Main>
    </Screen>
  );
};

export default App;
